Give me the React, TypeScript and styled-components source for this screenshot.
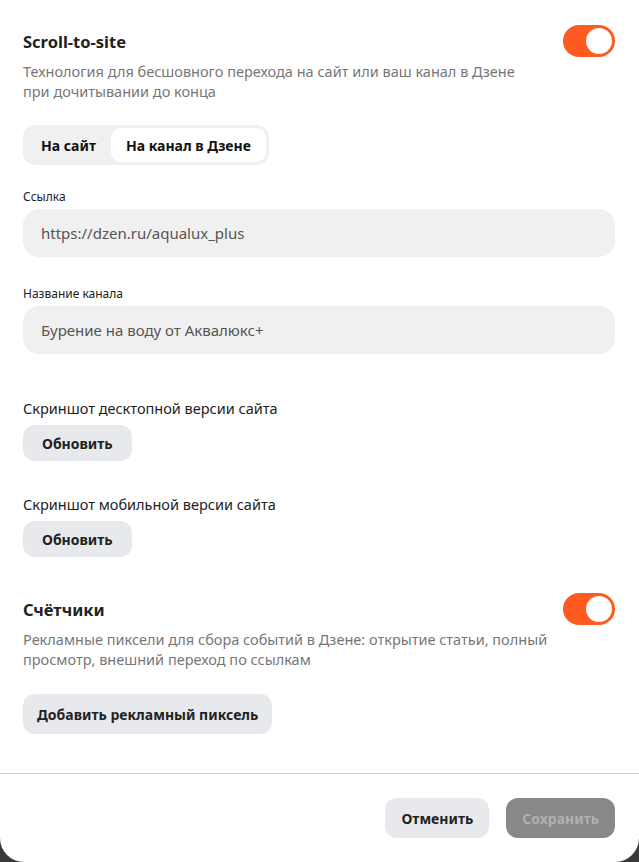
import React, { useState } from 'react';
import styled, { createGlobalStyle } from 'styled-components';

const GlobalStyle = createGlobalStyle`
  html, body {
    margin: 0;
    padding: 0;
    background: #3a3a3a;
  }
  * { box-sizing: border-box; }
`;

const Modal = styled.div`
  width: 639px;
  height: 862px;
  background: #fff;
  border-radius: 0 0 24px 24px;
  display: flex;
  flex-direction: column;
  font-family: "Noto Sans", "Open Sans", sans-serif;
  color: #222;
  overflow: hidden;
`;

const Body = styled.div`
  flex: 1;
  padding: 24px 24px 0 23px;
  display: flex;
  flex-direction: column;
`;

const SectionHead = styled.div`
  display: flex;
  justify-content: space-between;
  align-items: center;
  height: 34px;
`;

const Title = styled.h2`
  margin: 0;
  font-size: 16.5px;
  font-weight: 700;
  color: #222;
`;

const Description = styled.p<{ $maxWidth: number }>`
  margin: 3px 0 0;
  font-size: 14.5px;
  line-height: 20px;
  color: #777;
  max-width: ${p => p.$maxWidth}px;
`;

const Toggle = styled.button<{ $on: boolean }>`
  width: 52px;
  height: 32px;
  border: none;
  border-radius: 16px;
  padding: 3px;
  background: ${p => (p.$on ? '#ff5a1f' : '#ccc')};
  display: flex;
  justify-content: ${p => (p.$on ? 'flex-end' : 'flex-start')};
  cursor: pointer;
`;

const Knob = styled.span`
  width: 26px;
  height: 26px;
  border-radius: 50%;
  background: #fff;
`;

const Segmented = styled.div`
  margin-top: 24px;
  align-self: flex-start;
  display: flex;
  background: #f0f0f0;
  border-radius: 12px;
  padding: 3px;
`;

const Segment = styled.button<{ $active: boolean }>`
  border: none;
  height: 34px;
  padding: 0 15px;
  border-radius: 10px;
  font-family: inherit;
  font-size: 14px;
  font-weight: 700;
  color: #111;
  background: ${p => (p.$active ? '#fff' : 'transparent')};
  cursor: pointer;
`;

const Field = styled.div<{ $top: number }>`
  margin-top: ${p => p.$top}px;
  display: flex;
  flex-direction: column;
`;

const Label = styled.label`
  font-size: 12px;
  line-height: 16px;
  color: #222;
  margin-bottom: 4px;
`;

const Input = styled.input`
  height: 48px;
  border: none;
  border-radius: 16px;
  background: #f0f0f0;
  padding: 0 18px;
  font-family: inherit;
  font-size: 15px;
  color: #555;
  outline: none;
`;

const Caption = styled.div`
  font-size: 14.5px;
  line-height: 20px;
  color: #222;
  margin-bottom: 7px;
`;

const GrayButton = styled.button<{ $h?: number; $px?: number }>`
  align-self: flex-start;
  height: ${p => p.$h ?? 36}px;
  padding: 0 ${p => p.$px ?? 19}px;
  border: none;
  border-radius: 12px;
  background: #e8e9ec;
  font-family: inherit;
  font-size: 14px;
  font-weight: 700;
  color: #222;
  cursor: pointer;
`;

const Divider = styled.hr`
  margin: 0;
  border: none;
  border-top: 1px solid #cfcfcf;
`;

const Footer = styled.div`
  display: flex;
  justify-content: flex-end;
  gap: 17px;
  padding: 24px;
`;

const FooterButton = styled.button<{ $disabled?: boolean }>`
  height: 40px;
  padding: 0 16px;
  border: none;
  border-radius: 12px;
  font-family: inherit;
  font-size: 14px;
  font-weight: 700;
  background: ${p => (p.$disabled ? '#888' : '#e8e9ec')};
  color: ${p => (p.$disabled ? '#b0b0b0' : '#222')};
  cursor: ${p => (p.$disabled ? 'default' : 'pointer')};
`;

export default function App() {
  const [scroll, setScroll] = useState(true);
  const [counters, setCounters] = useState(true);
  const [target, setTarget] = useState<'site' | 'dzen'>('dzen');

  return (
    <>
      <GlobalStyle />
      <Modal>
        <Body>
          <SectionHead>
            <Title>Scroll-to-site</Title>
            <Toggle $on={scroll} onClick={() => setScroll(!scroll)}><Knob /></Toggle>
          </SectionHead>
          <Description $maxWidth={515}>
            Технология для бесшовного перехода на сайт или ваш канал в Дзене при дочитывании до конца
          </Description>

          <Segmented>
            <Segment $active={target === 'site'} onClick={() => setTarget('site')}>На сайт</Segment>
            <Segment $active={target === 'dzen'} onClick={() => setTarget('dzen')}>На канал в Дзене</Segment>
          </Segmented>

          <Field $top={24}>
            <Label>Ссылка</Label>
            <Input defaultValue="https://dzen.ru/aqualux_plus" />
          </Field>

          <Field $top={29}>
            <Label>Название канала</Label>
            <Input defaultValue="Бурение на воду от Аквалюкс+" />
          </Field>

          <Field $top={44}>
            <Caption>Скриншот десктопной версии сайта</Caption>
            <GrayButton>Обновить</GrayButton>
          </Field>

          <Field $top={33}>
            <Caption>Скриншот мобильной версии сайта</Caption>
            <GrayButton>Обновить</GrayButton>
          </Field>

          <Field $top={35}>
            <SectionHead>
              <Title>Счётчики</Title>
              <Toggle $on={counters} onClick={() => setCounters(!counters)}><Knob /></Toggle>
            </SectionHead>
            <Description $maxWidth={565}>
              Рекламные пиксели для сбора событий в Дзене: открытие статьи, полный просмотр, внешний переход по ссылкам
            </Description>
          </Field>

          <Field $top={25}>
            <GrayButton $h={40} $px={14}>Добавить рекламный пиксель</GrayButton>
          </Field>
        </Body>
        <Divider />
        <Footer>
          <FooterButton>Отменить</FooterButton>
          <FooterButton $disabled>Сохранить</FooterButton>
        </Footer>
      </Modal>
    </>
  );
}
